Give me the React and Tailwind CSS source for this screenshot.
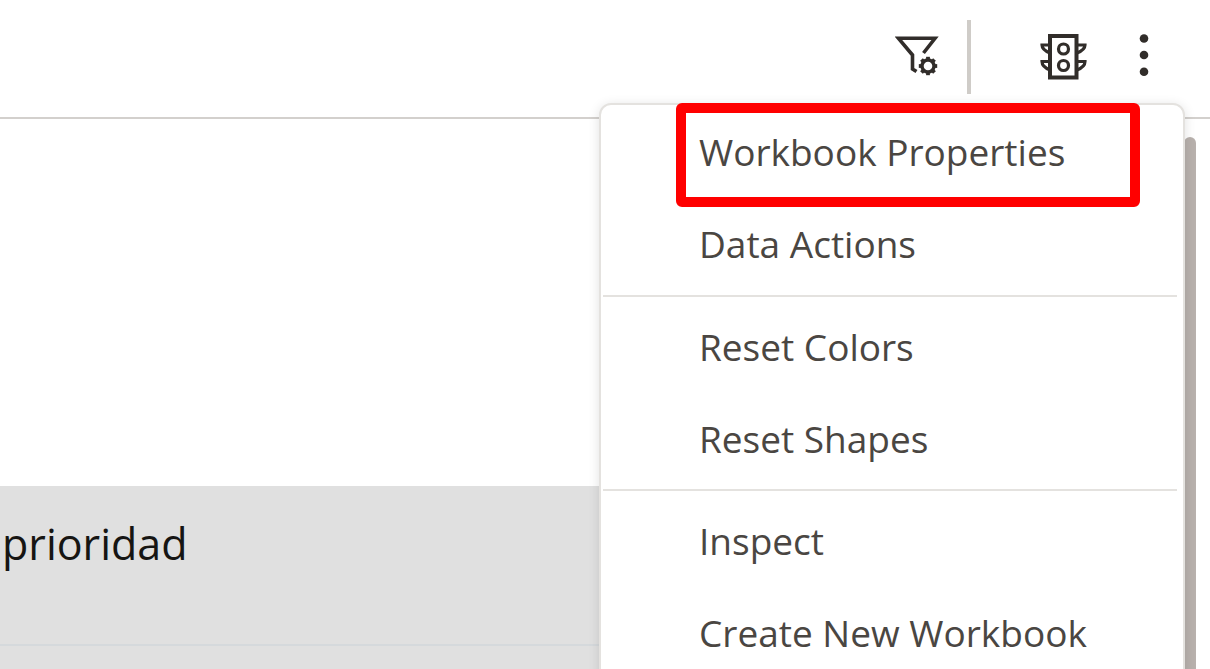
import React from "react";

const groups = [
  ["Workbook Properties", "Data Actions"],
  ["Reset Colors", "Reset Shapes"],
  ["Inspect", "Create New Workbook"],
];

const gearTeeth = [0, 45, 90, 135, 180, 225, 270, 315];

function FilterGearIcon() {
  return (
    <svg width="46" height="46" viewBox="0 0 46 46" fill="none" stroke="#312d2a" strokeWidth="3.6" aria-hidden="true">
      <path d="M28.500 21 L40 6.300 H3.500 L17.500 23 V37 L21.500 39.500" />
      <circle cx="33" cy="34" r="6" strokeWidth="3.4" />
      {gearTeeth.map((a) => (
        <path key={a} d="M33 27.700 V24.800" strokeWidth="3.8" transform={`rotate(${a} 33 34)`} />
      ))}
    </svg>
  );
}

function TrafficLightIcon() {
  return (
    <svg width="48" height="48" viewBox="0 0 48 48" fill="none" stroke="#312d2a" strokeWidth="3.2" aria-hidden="true">
      <path d="M11 4 H37.500 V45.500 H11 Z" strokeWidth="4" />
      <circle cx="24.500" cy="17" r="5" />
      <circle cx="24.500" cy="33.500" r="5" />
      <path d="M11 13 H3 C3 16 6 19 11 21 M11 29.500 H3 C3 33 6 36 11 38" />
      <path d="M38 13 H46 C46 16 43 19 38 21 M38 29.500 H46 C46 33 43 36 38 38" />
    </svg>
  );
}

function DotsIcon() {
  return (
    <svg width="12" height="46" viewBox="0 0 12 46" fill="#312d2a" aria-hidden="true">
      <circle cx="6" cy="6.500" r="4.300" />
      <circle cx="6" cy="23" r="4.300" />
      <circle cx="6" cy="39.800" r="4.300" />
    </svg>
  );
}

function WorkbookMenu() {
  return (
    <div
      role="menu"
      className="absolute top-[103px] right-[25px] w-[586px] rounded-xl border-2 border-[#e4e2df] bg-white px-0.5 pt-px pb-2 shadow-[0_2px_12px_rgba(0,0,0,0.12)]"
    >
      {groups.map((items, g) => (
        <div key={g} role="group" className={g > 0 ? "mr-1 border-t-2 border-[#e4e2df] pt-1 pb-1" : "pb-[5px]"}>
          {items.map((label) => (
            <button
              key={label}
              role="menuitem"
              className="block h-[92px] w-full pl-24 text-left text-[37px] leading-[92px] whitespace-nowrap text-[#4a4642]"
            >
              {label}
            </button>
          ))}
        </div>
      ))}
      <div
        aria-hidden="true"
        className="pointer-events-none absolute -top-0.5 left-[75px] h-[104px] w-[464px] rounded-md border-[10px] border-[#ff0000]"
      />
    </div>
  );
}

export default function App() {
  return (
    <div className="relative flex h-screen flex-col overflow-hidden bg-white font-['Open_Sans','Noto_Sans',sans-serif]">
      <header className="flex h-[119px] shrink-0 items-start justify-end border-b-2 border-[#d3d0cd] pt-5 pr-[60px]">
        <button aria-label="Filter settings" className="mt-3 mr-[26px]">
          <FilterGearIcon />
        </button>
        <div className="mr-[68px] h-[74px] w-1 bg-[#cfccc8]" />
        <button aria-label="Performance" className="mt-3 mr-[51px]">
          <TrafficLightIcon />
        </button>
        <button aria-label="Workbook menu" aria-haspopup="menu" aria-expanded="true" className="mt-3">
          <DotsIcon />
        </button>
      </header>

      <main className="flex min-h-0 flex-1">
        <section className="flex-1 pt-[367px]">
          <div className="h-[160px] border-b-2 border-[#d5d9dc] bg-[#e0e0e0] pt-7 pl-0.5 text-[43px] leading-[60px] text-[#161513]">
            prioridad
          </div>
          <div className="h-[160px] bg-[#e0e0e0]" />
        </section>
        <div className="flex w-[26px] pt-[18px] pr-[14px]">
          <div className="flex-1 rounded-t-full bg-[#b8b1ad]" />
        </div>
      </main>

      <WorkbookMenu />
    </div>
  );
}
